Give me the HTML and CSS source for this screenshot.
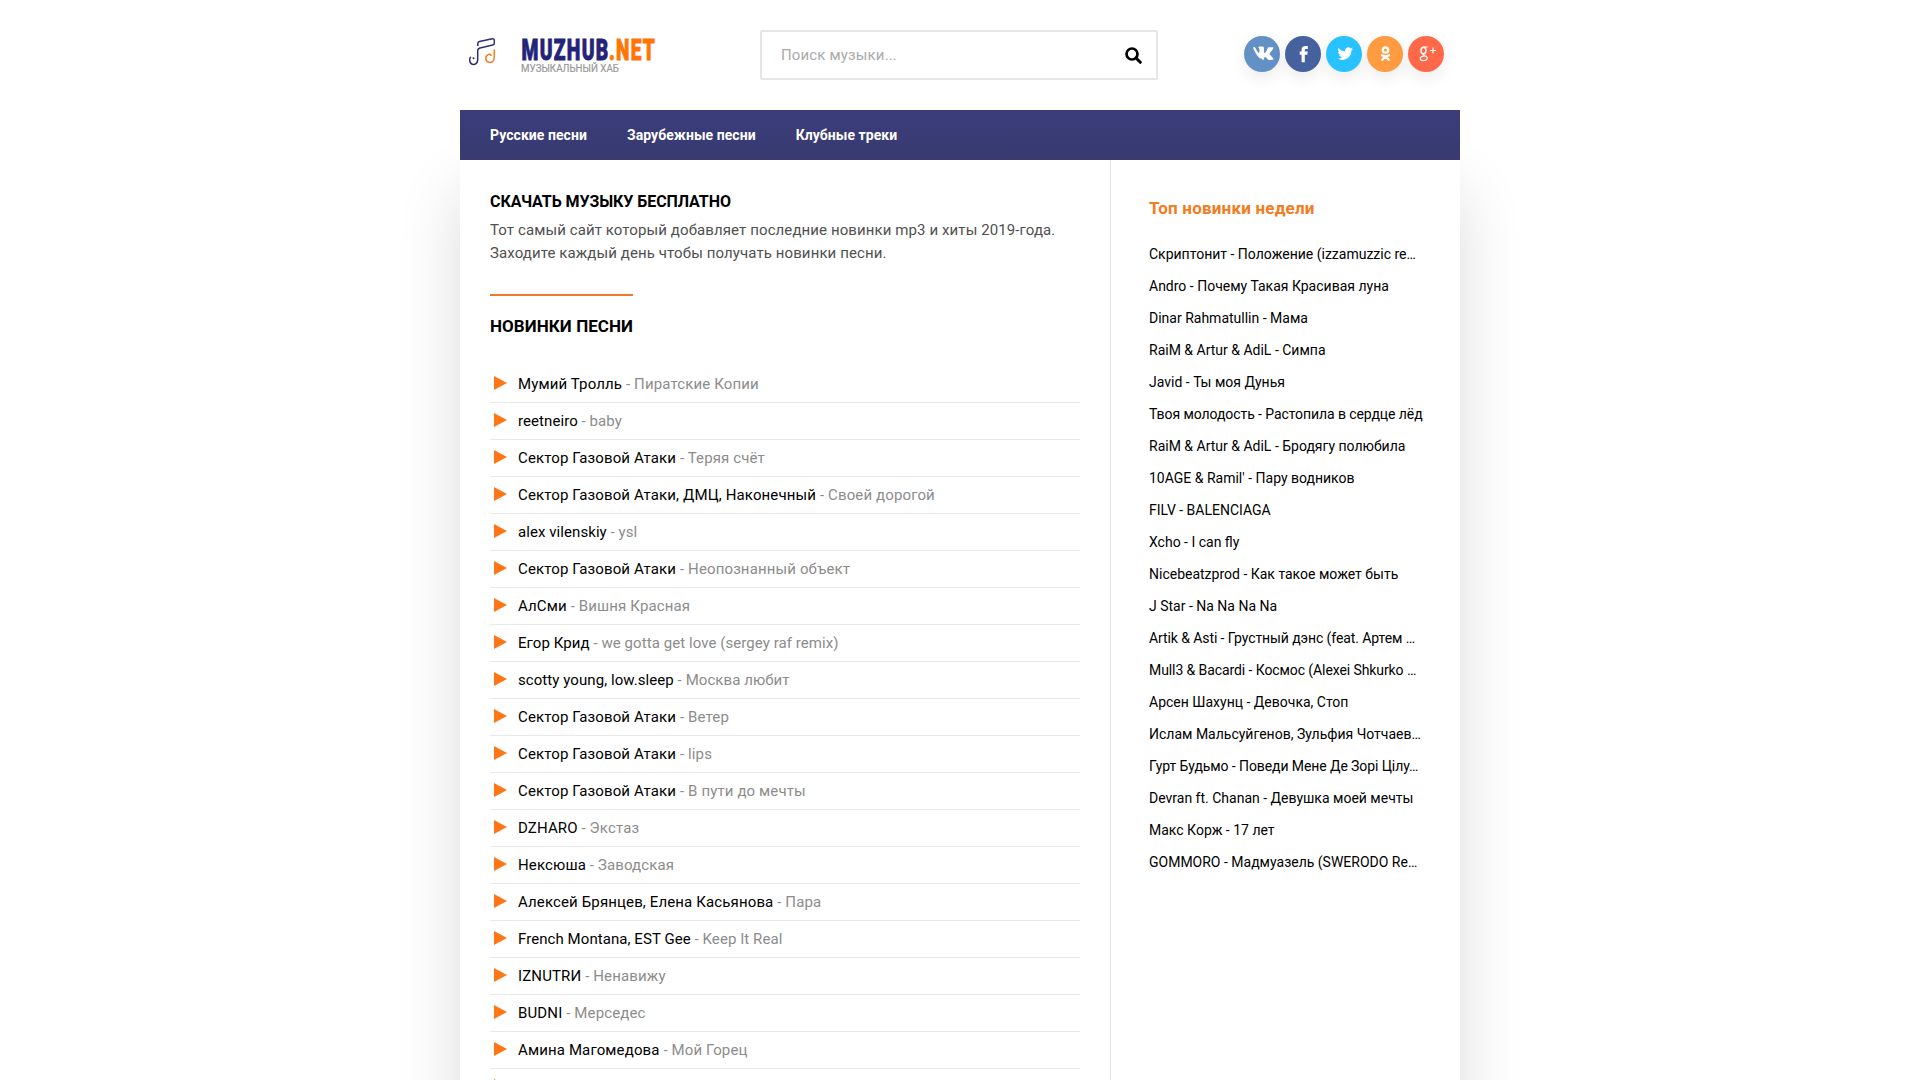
FILE: index.html
```html
<!DOCTYPE html>
<html lang="ru">
<head>
<meta charset="utf-8">
<title>MUZHUB.NET</title>
<link rel="stylesheet" href="styles.css">
</head>
<body>
<div class="wrap">
  <header class="header">
    <a class="logo">
      <svg width="200" height="50" viewBox="0 0 200 50">
        <g fill="none" stroke-width="1.500" stroke-linecap="round" stroke-linejoin="round">
          <path stroke="#2d2c75" d="M8.800 15.500V13.600Q8.800 12 10.500 11.600L23.300 8.700Q25.300 8.500 25.300 10.200V13.200Q25.300 14.700 23.700 15L11 17.900Q8.700 18.500 8.700 20.800V29C8.700 36 .8 36.200.6 29.800Q.6 28.500 1.500 27.300"/>
          <path stroke="#f47b20" d="M25.300 20V27.500C25.300 31.500 22.500 32.800 20 32.300C16 31.300 15.900 26.300 19 24.600Q21 23.800 22.200 25.500"/>
        </g>
        <circle cx="4.500" cy="28.300" r="1" fill="#2d2c75"/>
        <text class="logo-name" x="52.500" y="29.700" textLength="88" lengthAdjust="spacingAndGlyphs">MUZHUB</text>
        <text class="logo-name logo-zone" x="140" y="29.700" textLength="47" lengthAdjust="spacingAndGlyphs">.NET</text>
        <text class="logo-sub" x="52" y="42" textLength="98" lengthAdjust="spacingAndGlyphs">МУЗЫКАЛЬНЫЙ ХАБ</text>
      </svg>
    </a>
    <div class="search">
      <span>Поиск музыки...</span>
      <svg width="17" height="17" viewBox="0 0 17 17"><circle cx="7" cy="7" r="5.500" fill="none" stroke="#000" stroke-width="2.700"/><path d="M11 11l4.300 4.300" stroke="#000" stroke-width="3" stroke-linecap="round"/></svg>
    </div>
    <div class="social">
      <a class="vk"><svg viewBox="0 0 36 36"><path d="M18.200 23.800h1.200s.4 0 .5-.3c.2-.2.200-.6.200-.6s0-1.800.8-2.100c.8-.2 1.900 1.800 3 2.600.9.600 1.500.5 1.500.5l3-.1s1.600-.1.800-1.300c0-.1-.5-1-2.300-2.800-2-1.800-1.700-1.500.6-4.600 1.400-1.900 2-3 1.800-3.500-.1-.5-1.300-.3-1.300-.3h-3.400s-.3 0-.4.100c-.2.100-.3.400-.3.400s-.5 1.400-1.200 2.600c-1.600 2.600-2.200 2.800-2.400 2.600-.6-.4-.4-1.500-.4-2.300 0-2.600.4-3.600-.8-3.900-.4-.1-.6-.2-1.600-.2-1.200 0-2.300 0-2.900.3-.4.200-.7.600-.5.700.2 0 .7.100 1 .5.300.5.300 1.500.3 1.500s.2 3-.4 3.300c-.4.200-1-.3-2.400-2.600-.7-1.200-1.200-2.500-1.200-2.500s-.1-.2-.3-.4c-.2-.1-.5-.2-.5-.2H9.800s-.5 0-.7.200c-.2.200 0 .6 0 .6s2.500 5.900 5.400 8.900c1.600 1.700 3 1.900 3.700 1.900z"/></svg></a>
      <a class="fb"><svg viewBox="0 0 36 36"><path d="M16.600 26.300V18.800H14.700V15.600h1.900v-2c0-2.500 1.500-3.700 3.800-3.700l2.400.1v3h-1.600c-1.200 0-1.400.5-1.400 1.300v1.300h2.900l-.4 3.200h-2.500v7.500z"/></svg></a>
      <a class="tw"><svg viewBox="0 0 36 36"><path d="M27 12.900c-.6.300-1.200.4-1.800.5.700-.4 1.200-1 1.400-1.800-.6.400-1.300.6-2 .8a3.200 3.200 0 0 0-5.500 2.900c-2.700-.1-5-1.400-6.600-3.400-.9 1.500-.4 3.300 1 4.300-.5 0-1-.2-1.400-.4 0 1.500 1.100 2.900 2.500 3.200-.5.100-1 .1-1.400 0 .4 1.300 1.600 2.200 3 2.200a6.400 6.400 0 0 1-4.700 1.400c4.800 3.100 13.900.7 13.900-8.100.6-.4 1.200-1 1.600-1.600z"/></svg></a>
      <a class="ok"><svg viewBox="0 0 36 36"><g fill="none" stroke="#fff" stroke-width="2.300" stroke-linecap="round"><circle cx="18.500" cy="14" r="2.700"/><path d="M15 19.200q3.500 2 7 0M18.500 20.500l-3.200 3.300M18.500 20.500l3.200 3.300"/></g></svg></a>
      <a class="gp"><svg viewBox="0 0 36 36"><g fill="none" stroke="#fff"><ellipse cx="15.500" cy="14.400" rx="2.500" ry="3.200" stroke-width="1.400"/><path stroke-width="1.200" d="M15.500 11h4.200M17 17.400c-3 .3-2.500 1.500-.6 2.200 2.300.9 3.300 1.700 2.600 3.400-.9 2-6.400 2.200-6.800-.2-.3-2 2.200-2.800 4.200-2.700M22 14.500h6M25 11.500v6"/></g></svg></a>
    </div>
  </header>
  <div class="panel">
    <nav class="nav"><a>Русские песни</a><a>Зарубежные песни</a><a>Клубные треки</a></nav>
    <div class="cols">
      <main class="main">
        <h1>СКАЧАТЬ МУЗЫКУ БЕСПЛАТНО</h1>
        <p class="intro">Тот самый сайт который добавляет последние новинки mp3 и хиты 2019-года. Заходите каждый день чтобы получать новинки песни.</p>
        <h2>НОВИНКИ ПЕСНИ</h2>
        <ul class="tracks">
          <li><b>Мумий Тролль</b> - Пиратские Копии</li>
          <li class="latin"><b>reetneiro</b> - baby</li>
          <li><b>Сектор Газовой Атаки</b> - Теряя счёт</li>
          <li><b>Сектор Газовой Атаки, ДМЦ, Наконечный</b> - Своей дорогой</li>
          <li class="latin"><b>alex vilenskiy</b> - ysl</li>
          <li><b>Сектор Газовой Атаки</b> - Неопознанный объект</li>
          <li><b>АлСми</b> - Вишня Красная</li>
          <li class="latin"><b>Егор Крид</b> - we gotta get love (sergey raf remix)</li>
          <li class="latin"><b>scotty young, low.sleep</b> - Москва любит</li>
          <li><b>Сектор Газовой Атаки</b> - Ветер</li>
          <li><b>Сектор Газовой Атаки</b> - lips</li>
          <li><b>Сектор Газовой Атаки</b> - В пути до мечты</li>
          <li><b>DZHARO</b> - Экстаз</li>
          <li><b>Нексюша</b> - Заводская</li>
          <li><b>Алексей Брянцев, Елена Касьянова</b> - Пара</li>
          <li class="latin"><b>French Montana, EST Gee</b> - Keep It Real</li>
          <li><b>IZNUTRИ</b> - Ненавижу</li>
          <li><b>BUDNI</b> - Мерседес</li>
          <li><b>Амина Магомедова</b> - Мой Горец</li>
          <li></li>
        </ul>
      </main>
      <aside class="side">
        <h3>Топ новинки недели</h3>
        <ul class="top">
          <li>Скриптонит - Положение (izzamuzzic re…</li>
          <li>Andro - Почему Такая Красивая луна</li>
          <li>Dinar Rahmatullin - Мама</li>
          <li>RaiM &amp; Artur &amp; AdiL - Симпа</li>
          <li>Javid - Ты моя Дунья</li>
          <li class="fit">Твоя молодость - Растопила в сердце лёд</li>
          <li>RaiM &amp; Artur &amp; AdiL - Бродягу полюбила</li>
          <li>10AGE &amp; Ramil' - Пару водников</li>
          <li>FILV - BALENCIAGA</li>
          <li>Xcho - I can fly</li>
          <li>Nicebeatzprod - Как такое может быть</li>
          <li>J Star - Na Na Na Na</li>
          <li class="snug">Artik &amp; Asti - Грустный дэнс (feat. Артем …</li>
          <li class="snug">Mull3 &amp; Bacardi - Космос (Alexei Shkurko …</li>
          <li>Арсен Шахунц - Девочка, Стоп</li>
          <li>Ислам Мальсуйгенов, Зульфия Чотчаев…</li>
          <li class="snug">Гурт Будьмо - Поведи Мене Де Зорі Цілу…</li>
          <li>Devran ft. Chanan - Девушка моей мечты</li>
          <li>Макс Корж - 17 лет</li>
          <li>GOMMORO - Мадмуазель (SWERODO Re…</li>
        </ul>
      </aside>
    </div>
  </div>
</div>
</body>
</html>
```
FILE: styles.css
```css
* { box-sizing: border-box; }
body { margin: 0; height: 1080px; overflow: hidden; background: #fff; color: #000; font-family: Roboto, "Noto Sans", sans-serif; }
h1, h2, h3, p, ul { margin: 0; padding: 0; }
ul { list-style: none; }
.wrap { width: 1000px; margin: 0 auto; }
.header { height: 110px; padding: 0 16px 0 9px; display: flex; align-items: center; justify-content: space-between; }
.logo { width: 200px; height: 50px; }
.logo svg { display: block; }
.logo-name { font-size: 30px; font-weight: 900; letter-spacing: 2px; fill: #24237a; stroke: #24237a; stroke-width: .9px; }
.logo-zone { fill: #ff7405; stroke: #ff7405; }
.logo-sub { font-size: 10.5px; fill: #999; stroke: #999; stroke-width: .2px; }
.search { width: 398px; height: 50px; margin-left: 5px; padding: 0 14px 0 19px; border: 2px solid #e6e6e6; border-radius: 2px; display: flex; align-items: center; justify-content: space-between; font-size: 15px; letter-spacing: .15px; color: #aaa; }
.social { display: flex; gap: 5px; margin-top: -2px; }
.social a { width: 36px; height: 36px; border-radius: 50%; box-shadow: 0 6px 16px rgba(0, 0, 0, .08); }
.social svg { display: block; fill: #fff; }
.vk { background: #6391c5; }
.fb { background: #46629e; }
.tw { background: #28c3ff; }
.ok { background: #ff9b40; }
.gp { background: #ff6848; }
.panel { height: 970px; box-shadow: 0 80px 60px rgba(0, 0, 0, .14); background: #fff; }
.nav { height: 50px; padding: 0 30px; display: flex; align-items: center; gap: 40px; background: linear-gradient(#3a3d7b, #383a70); color: #fff; font-size: 14px; font-weight: 700; letter-spacing: .06px; }
.cols { display: flex; height: 920px; overflow: hidden; }
.main { width: 650px; padding: 32px 30px 0; }
.main h1 { font-size: 16px; line-height: 20px; font-weight: 700; letter-spacing: -.08px; }
.intro { margin-top: 7px; font-size: 15px; line-height: 23px; letter-spacing: .1px; color: #505050; }
.main h2 { display: inline-block; margin-top: 29px; padding-top: 20px; border-top: 2px solid #ed792c; font-size: 17px; line-height: 20px; font-weight: 700; letter-spacing: .07px; vertical-align: top; }
.tracks { margin-top: 30px; }
.tracks li { height: 37px; padding-left: 28px; border-bottom: 1px solid #e9e9e9; display: block; position: relative; font-size: 15px; line-height: 36px; letter-spacing: .13px; color: #8c8c8c; }
.tracks .latin { letter-spacing: .07px; }
.tracks li::before { content: ""; position: absolute; left: 4px; top: 10px; border-left: 13px solid #ff7617; border-top: 7px solid transparent; border-bottom: 7px solid transparent; }
.tracks b { font-weight: 400; color: #000; }
.side { width: 350px; padding: 38px 37px 0 38px; border-left: 1px solid #e3e6e8; }
.side h3 { color: #f47b20; font-size: 17px; line-height: 20px; font-weight: 700; letter-spacing: .2px; }
.top { margin-top: 20px; }
.top li { font-size: 14px; line-height: 32px; white-space: nowrap; }
.top .fit { letter-spacing: -.08px; }
.top .snug { letter-spacing: -.09px; }
```
